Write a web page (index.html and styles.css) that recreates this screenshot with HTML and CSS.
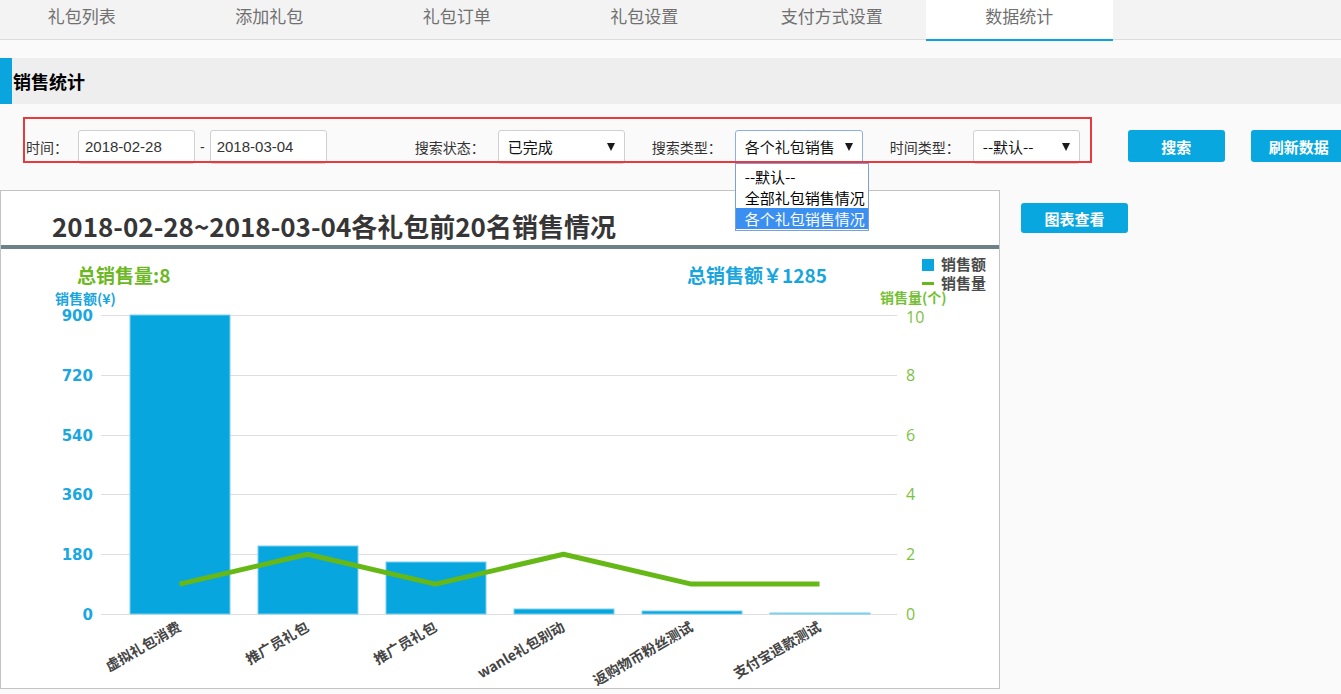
FILE: index.html
```html
<!DOCTYPE html>
<html lang="zh-CN">
<head>
<meta charset="utf-8">
<title>数据统计</title>
<link rel="stylesheet" href="styles.css">
</head>
<body>
<nav class="tabs">
  <ul class="tab-list">
    <li class="tab">礼包列表</li>
    <li class="tab">添加礼包</li>
    <li class="tab">礼包订单</li>
    <li class="tab">礼包设置</li>
    <li class="tab">支付方式设置</li>
    <li class="tab active">数据统计</li>
  </ul>
</nav>

<div class="section-head"><h2 class="section-title">销售统计</h2></div>

<div class="filter">
  <span class="lbl lbl-time">时间：</span>
  <div class="input">2018-02-28</div>
  <span class="dash">-</span>
  <div class="input">2018-03-04</div>

  <span class="lbl lbl-status">搜索状态：</span>
  <div class="select sel-status">已完成<span class="arrow"></span></div>

  <span class="lbl lbl-group">搜索类型：</span>
  <div class="select sel-type focused">各个礼包销售<span class="arrow"></span>
    <ul class="dropdown">
      <li class="opt">--默认--</li>
      <li class="opt">全部礼包销售情况</li>
      <li class="opt selected">各个礼包销售情况</li>
    </ul>
  </div>

  <span class="lbl lbl-group">时间类型：</span>
  <div class="select sel-time">--默认--<span class="arrow"></span></div>

  <button class="btn btn-search">搜索</button>
  <button class="btn btn-refresh">刷新数据</button>

  <div class="annot"></div>
</div>

<div class="main">
  <div class="chart-panel">
    <svg class="chart" width="998" height="497" viewBox="1 191 998 497" xmlns="http://www.w3.org/2000/svg">
      <text class="c-title" x="52" y="237">2018-02-28~2018-03-04各礼包前20名销售情况</text>
      <rect x="1" y="245" width="998" height="4" fill="#6b8289"/>

      <text class="c-total-qty" x="77" y="283">总销售量:8</text>
      <text class="c-total-amt" x="687" y="283">总销售额￥1285</text>

      <rect x="922" y="259" width="12" height="12" fill="#0aa6df"/>
      <text class="c-legend" x="941" y="270">销售额</text>
      <rect x="922" y="282" width="12" height="3" fill="#66b817"/>
      <text class="c-legend" x="941" y="289">销售量</text>

      <text class="c-axis-title-l" x="55" y="304">销售额(¥)</text>
      <text class="c-axis-title-r" x="880" y="303">销售量(个)</text>

      <g class="grid">
        <line x1="101" y1="315.5" x2="897" y2="315.5"/>
        <line x1="101" y1="375.5" x2="897" y2="375.5"/>
        <line x1="101" y1="435.5" x2="897" y2="435.5"/>
        <line x1="101" y1="494.5" x2="897" y2="494.5"/>
        <line x1="101" y1="554.5" x2="897" y2="554.5"/>
        <line x1="101" y1="614.5" x2="897" y2="614.5"/>
      </g>

      <g class="c-yl">
        <text x="93" y="321">900</text>
        <text x="93" y="381">720</text>
        <text x="93" y="441">540</text>
        <text x="93" y="500">360</text>
        <text x="93" y="560">180</text>
        <text x="93" y="620">0</text>
      </g>
      <g class="c-yr">
        <text x="906" y="323">10</text>
        <text x="906" y="381">8</text>
        <text x="906" y="441">6</text>
        <text x="906" y="500">4</text>
        <text x="906" y="560">2</text>
        <text x="906" y="620">0</text>
      </g>

      <g class="bars">
        <rect x="130" y="315" width="100" height="299"/>
        <rect x="258" y="546" width="100" height="68"/>
        <rect x="386" y="562" width="100" height="52"/>
        <rect x="514" y="609" width="100" height="5"/>
        <rect x="642" y="611" width="100" height="3"/>
        <rect x="770" y="613" width="100" height="1"/>
      </g>

      <polyline class="qty-line" points="179.5,584.1 307.5,554.2 435.5,584.1 563.5,554.2 691.5,584.1 819.5,584.1"/>

      <g class="c-xl">
        <text x="182" y="630" transform="rotate(-30 182 630)">虚拟礼包消费</text>
        <text x="310" y="630" transform="rotate(-30 310 630)">推广员礼包</text>
        <text x="438" y="630" transform="rotate(-30 438 630)">推广员礼包</text>
        <text x="566" y="630" transform="rotate(-30 566 630)">wanle礼包别动</text>
        <text x="694" y="630" transform="rotate(-30 694 630)">返购物币粉丝测试</text>
        <text x="822" y="630" transform="rotate(-30 822 630)">支付宝退款测试</text>
      </g>
    </svg>
  </div>
  <div class="side">
    <button class="btn btn-view">图表查看</button>
  </div>
</div>
</body>
</html>
```

FILE: styles.css
```css
* { box-sizing: border-box; }

html, body {
  margin: 0;
  padding: 0;
}

body {
  width: 1341px;
  height: 694px;
  overflow: hidden;
  background: #fafafa;
  color: #333;
  font-family: "Liberation Sans", "Noto Sans CJK SC", sans-serif;
}

/* ---------- tabs ---------- */
.tabs {
  height: 40px;
  background: #f3f3f3;
  border-bottom: 1px solid #dcdcdc;
}

.tab-list {
  display: flex;
  margin: 0 0 0 -12px;
  padding: 0;
  list-style: none;
}

.tab {
  flex: 0 0 187.5px;
  height: 39px;
  line-height: 31px;
  text-align: center;
  font-family: "Noto Sans CJK SC", sans-serif;
  font-size: 17px;
  color: #707070;
}

.tab.active {
  background: #fff;
  height: 41px;
  border-bottom: 2px solid #0aa3dc;
}

/* ---------- section head ---------- */
.section-head {
  margin-top: 18px;
  height: 46px;
  background: #eeeeee;
  border-left: 12px solid #0aa5de;
  padding-left: 1px;
}

.section-title {
  margin: 0;
  font-family: "Noto Sans CJK SC", sans-serif;
  font-size: 18px;
  font-weight: bold;
  line-height: 46px;
  color: #000;
}

/* ---------- filter ---------- */
.filter {
  position: relative;
  display: flex;
  align-items: flex-start;
  height: 86px;
  padding-top: 26px;
  white-space: nowrap;
}

.filter > * { flex-shrink: 0; }

.lbl {
  font-family: "Noto Sans CJK SC", sans-serif;
  font-size: 14px;
  line-height: 34px;
  color: #333;
  margin-right: 13px;
}

.lbl-time { margin-left: 26px; margin-right: 10px; }
.lbl-status { margin-left: 88px; }
.lbl-group { margin-left: 27px; }

.input {
  width: 117px;
  height: 34px;
  background: #fff;
  border: 1px solid #d0d0d0;
  border-radius: 3px;
  padding-left: 6px;
  font-family: "Liberation Sans", sans-serif;
  font-size: 15px;
  line-height: 32px;
  color: #333;
}

.dash {
  margin: 0 5px;
  font-size: 14px;
  line-height: 34px;
}

.select {
  position: relative;
  height: 34px;
  background: #fff;
  border: 1px solid #d0d0d0;
  border-radius: 3px;
  padding-left: 9px;
  font-family: "Noto Sans CJK SC", sans-serif;
  font-size: 15px;
  line-height: 32px;
  color: #111;
}

.sel-status { width: 127px; }
.sel-type { width: 128px; }
.sel-time { width: 107px; }

.select.focused { border-color: #8eaee6; }

.arrow {
  position: absolute;
  right: 9px;
  top: 12px;
  width: 0;
  height: 0;
  border-left: 4px solid transparent;
  border-right: 4px solid transparent;
  border-top: 8px solid #1a1a1a;
}

.dropdown {
  position: absolute;
  z-index: 5;
  left: -1px;
  top: 32px;
  width: 134px;
  margin: 0;
  padding: 2px 0 1px;
  list-style: none;
  background: #fff;
  border: 1px solid #7b9fd6;
}

.opt {
  height: 21px;
  line-height: 21px;
  padding-left: 9px;
  font-size: 15px;
  color: #000;
}

.opt.selected {
  background: #3b8ff0;
  color: #fff;
}

.btn {
  height: 32px;
  border: none;
  border-radius: 3px;
  background: #09a7e0;
  color: #fff;
  font-family: "Noto Sans CJK SC", sans-serif;
  font-size: 15px;
  font-weight: bold;
  padding: 0;
}

.btn-search { width: 97px; margin-left: 48px; }
.btn-refresh { width: 100px; margin-left: 26px; text-align: left; padding-left: 18px; }

.annot {
  position: absolute;
  z-index: 3;
  left: 23px;
  top: 13px;
  width: 1069px;
  height: 46px;
  border: 2px solid #e8393c;
  pointer-events: none;
}

/* ---------- main ---------- */
.main {
  display: flex;
  align-items: flex-start;
}

.chart-panel {
  flex: 0 0 1000px;
  height: 499px;
  background: #fff;
  border: 1px solid #c3c3c3;
}

.chart { display: block; }

.side {
  margin-left: 21px;
  margin-top: 13px;
}

.btn-view {
  width: 107px;
  height: 30px;
}

/* ---------- chart text ---------- */
.chart text {
  font-family: "Noto Sans CJK SC", sans-serif;
}

.c-title {
  font-size: 26px;
  font-weight: bold;
  fill: #363636;
}

.c-total-qty {
  font-size: 19px;
  font-weight: bold;
  fill: #6cb823;
}

.c-total-amt {
  font-size: 19px;
  font-weight: bold;
  fill: #17a5de;
}

.c-legend {
  font-size: 15px;
  font-weight: bold;
  fill: #4a4a4a;
}

.c-axis-title-l {
  font-size: 14px;
  font-weight: bold;
  fill: #17a5de;
}

.c-axis-title-r {
  font-size: 14px;
  font-weight: bold;
  fill: #74bf34;
}

.grid line {
  stroke: #dedede;
  stroke-width: 1;
}

.chart .c-yl text {
  font-family: "DejaVu Sans", sans-serif;
  font-size: 15px;
  font-weight: bold;
  fill: #1ba7df;
  text-anchor: end;
}

.chart .c-yr text {
  font-family: "Open Sans", sans-serif;
  font-size: 16px;
  fill: #7cc241;
}

.bars rect {
  fill: #07a6df;
  stroke: #7fd0ee;
  stroke-width: 1;
}

.qty-line {
  fill: none;
  stroke: #66b817;
  stroke-width: 5;
  stroke-linejoin: round;
}

.chart .c-xl text {
  font-size: 14px;
  font-weight: bold;
  fill: #444;
  text-anchor: end;
}
```
